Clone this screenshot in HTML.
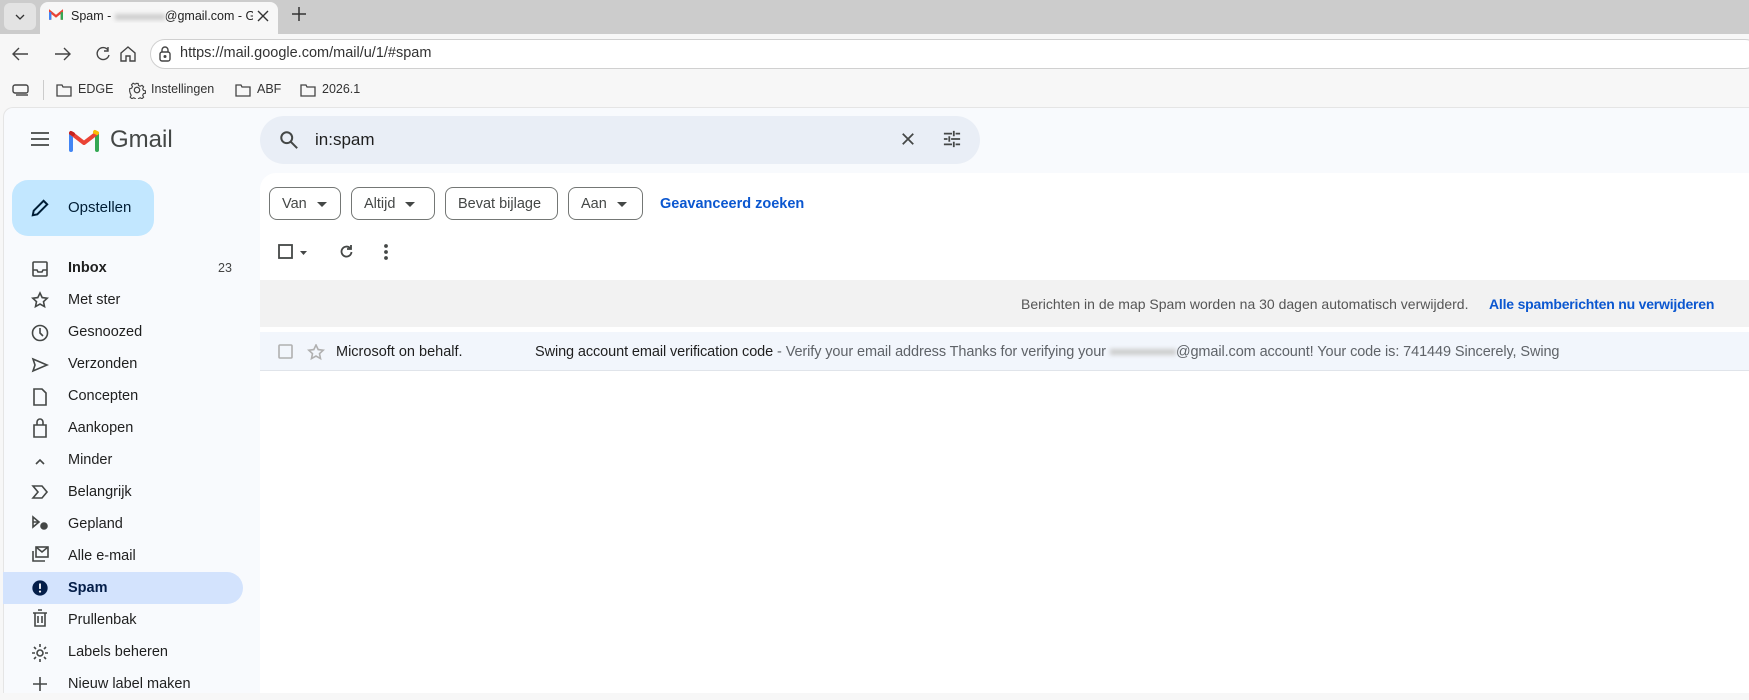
<!DOCTYPE html>
<html><head><meta charset="utf-8">
<style>
*{box-sizing:border-box;margin:0;padding:0}
body{width:1749px;height:693px;overflow:hidden;background:#f7f7f7;font-family:"Liberation Sans",Arial,sans-serif;position:relative;color:#1f1f1f}
.abs{position:absolute}
.tabbar{left:0;top:0;width:1749px;height:34px;background:#cccccc}
.tab{left:40px;top:2px;width:238px;height:32px;background:#f7f7f7;border-radius:8px 8px 0 0}
.addr{left:0;top:34px;width:1749px;height:39px;background:#f7f7f7}
.url{left:150px;top:39px;width:1610px;height:30px;background:#fff;border:1px solid #d0d0d0;border-radius:15px}
.bm{font-size:12.5px;color:#333;top:82px}
.gm{left:3px;top:107px;width:1746px;height:586px;background:#f8fafd;border-radius:10px 0 0 0;border-left:1px solid #e5e5e5;border-top:1px solid #e5e5e5}
.nav{left:68px;font-size:14.5px;color:#1f1f1f}
.main{left:260px;top:173px;width:1489px;height:520px;background:#fff;border-radius:16px 0 0 0}
.chip{top:187px;height:33px;border:1px solid #747775;border-radius:8px;font-size:14.5px;color:#444746;line-height:33px;padding-left:12px}
.tri{display:inline-block;width:0;height:0;border-left:5px solid transparent;border-right:5px solid transparent;border-top:5px solid #444746;vertical-align:middle;margin-left:10px}
</style></head><body>
<div class="abs tabbar"></div>
<div class="abs" style="left:4px;top:3px;width:32px;height:27px;background:#e3e3e3;border-radius:6px"></div>
<svg class="abs" style="left:13px;top:10px" width="14" height="14" viewBox="0 0 14 14"><path d="M3 5l4 4 4-4" fill="none" stroke="#333" stroke-width="1.3"/></svg>
<div class="abs tab"></div>
<svg class="abs" style="left:49px;top:9px" width="14" height="11" viewBox="0 0 24 18"><path d="M2 18V4l10 8 10-8v14" fill="none" stroke="#ea4335" stroke-width="4"/><path d="M2 18V5" stroke="#4285f4" stroke-width="4"/><path d="M22 18V5" stroke="#34a853" stroke-width="4"/></svg>
<div class="abs" style="left:71px;top:9px;width:182px;overflow:hidden;white-space:nowrap;font-size:12.5px;color:#222">Spam - <span style="display:inline-block;width:50px;height:6px;background:#ccc;filter:blur(2px);vertical-align:middle"></span>@gmail.com - Gm</div>
<svg class="abs" style="left:257px;top:10px" width="12" height="12" viewBox="0 0 12 12"><path d="M1 1l10 10M11 1L1 11" stroke="#333" stroke-width="1.4"/></svg>
<svg class="abs" style="left:291px;top:6px" width="16" height="16" viewBox="0 0 16 16"><path d="M8 1v14M1 8h14" stroke="#333" stroke-width="1.5"/></svg>
<div class="abs addr"></div>
<svg class="abs" style="left:10px;top:44px" width="120" height="20" viewBox="0 0 120 20" fill="none" stroke="#444" stroke-width="1.4"><path d="M18 10H3M9 4l-6 6 6 6"/><path d="M45 10h15M54 4l6 6-6 6"/><path d="M98 6a6 6 0 1 0 1 5M98 3v4h-4"/></svg>
<svg class="abs" style="left:118px;top:44px" width="20" height="20" viewBox="0 0 20 20" fill="none" stroke="#444" stroke-width="1.4"><path d="M3 9l7-6 7 6v8h-5v-5H8v5H3z"/></svg>
<div class="abs url"></div>
<svg class="abs" style="left:157px;top:45px" width="16" height="18" viewBox="0 0 16 18" fill="none" stroke="#444" stroke-width="1.4"><rect x="3" y="7" width="10" height="9" rx="2"/><path d="M5 7V5a3 3 0 0 1 6 0v2"/><circle cx="8" cy="11.5" r=".8" fill="#444"/></svg>
<div class="abs" style="left:180px;top:45px;font-size:14.5px;color:#333">https://mail.google.com/mail/u/1/#spam</div>
<svg class="abs" style="left:12px;top:83px" width="18" height="14" viewBox="0 0 18 14" fill="none" stroke="#444" stroke-width="1.4"><rect x="1" y="2" width="15" height="8" rx="2"/><path d="M4 12h12"/></svg>
<div class="abs" style="left:43px;top:80px;width:1px;height:20px;background:#ccc"></div>
<svg class="abs" style="left:56px;top:83px" width="16" height="14" viewBox="0 0 16 14" fill="none" stroke="#444" stroke-width="1.3"><path d="M1 2h5l1 2h8v9H1z"/></svg>
<div class="abs bm" style="left:78px">EDGE</div>
<svg class="abs" style="left:128px;top:81px" width="18" height="18" viewBox="0 0 20 20" fill="none" stroke="#444" stroke-width="1.4"><circle cx="10" cy="10" r="3"/><path d="M8.5 2h3l.5 2.5 2 1 2.3-1.2 2 2-1.2 2.3 1 2 2.5.5v3l-2.5.5-1 2 1.2 2.3-2 2-2.3-1.2-2 1-.5 2.5h-3l-.5-2.5-2-1-2.3 1.2-2-2 1.2-2.3-1-2L1 11.5v-3l2.5-.5 1-2L3.3 3.7l2-2 2.3 1.2 2-1z" transform="scale(.9) translate(1 1)"/></svg>
<div class="abs bm" style="left:151px">Instellingen</div>
<svg class="abs" style="left:235px;top:83px" width="16" height="14" viewBox="0 0 16 14" fill="none" stroke="#444" stroke-width="1.3"><path d="M1 2h5l1 2h8v9H1z"/></svg>
<div class="abs bm" style="left:257px">ABF</div>
<svg class="abs" style="left:300px;top:83px" width="16" height="14" viewBox="0 0 16 14" fill="none" stroke="#444" stroke-width="1.3"><path d="M1 2h5l1 2h8v9H1z"/></svg>
<div class="abs bm" style="left:322px">2026.1</div>

<div class="abs gm"></div>
<svg class="abs" style="left:31px;top:132px" width="18" height="14" viewBox="0 0 18 14"><path d="M0 1h18M0 7h18M0 13h18" stroke="#444746" stroke-width="1.8"/></svg>
<svg class="abs" style="left:69px;top:129px" width="30" height="23" viewBox="0 0 30 23"><path d="M2 21V5" stroke="#4285f4" stroke-width="4" stroke-linecap="round"/><path d="M28 21V5" stroke="#34a853" stroke-width="4" stroke-linecap="round"/><path d="M2 4l13 10L28 4" fill="none" stroke="#ea4335" stroke-width="4" stroke-linejoin="round"/><path d="M26 3l2 1" stroke="#fbbc04" stroke-width="4" stroke-linecap="round"/><path d="M2 4l2 1" stroke="#c5221f" stroke-width="4" stroke-linecap="round"/></svg>
<div class="abs" style="left:110px;top:126px;font-size:24px;color:#444746">Gmail</div>

<div class="abs" style="left:260px;top:116px;width:720px;height:48px;background:#e9eef6;border-radius:24px"></div>
<svg class="abs" style="left:279px;top:130px" width="20" height="20" viewBox="0 0 22 22" fill="none" stroke="#444746" stroke-width="2.2"><circle cx="8.5" cy="8.5" r="6"/><path d="M13 13l7 7"/></svg>
<div class="abs" style="left:315px;top:130px;font-size:17px;color:#1f1f1f">in:spam</div>
<svg class="abs" style="left:901px;top:132px" width="14" height="14" viewBox="0 0 16 16"><path d="M2 2l12 12M14 2L2 14" stroke="#444746" stroke-width="2"/></svg>
<svg class="abs" style="left:943px;top:130px" width="18" height="18" viewBox="0 0 20 18" stroke="#444746" stroke-width="2"><path d="M1 3h9M14 3h5M12 0v6M1 9h4M9 9h10M7 6v6M1 15h9M14 15h5M12 12v6"/></svg>

<div class="abs" style="left:12px;top:180px;width:142px;height:56px;background:#c2e7ff;border-radius:16px"></div>
<svg class="abs" style="left:31px;top:199px" width="18" height="18" viewBox="0 0 20 20" fill="none" stroke="#001d35" stroke-width="2.2"><path d="M2 18l1-5L14 2l4 4L7 17z"/></svg>
<div class="abs" style="left:68px;top:199px;font-size:15px;color:#001d35">Opstellen</div>

<div class="abs" style="left:3px;top:572px;width:240px;height:32px;background:#d3e3fd;border-radius:0 16px 16px 0"></div>
<div class="abs nav" style="top:260px;font-weight:bold">Inbox</div>
<div class="abs" style="left:218px;top:261px;font-size:12.5px;color:#444">23</div>
<div class="abs nav" style="top:292px">Met ster</div>
<div class="abs nav" style="top:324px">Gesnoozed</div>
<div class="abs nav" style="top:356px">Verzonden</div>
<div class="abs nav" style="top:388px">Concepten</div>
<div class="abs nav" style="top:420px">Aankopen</div>
<div class="abs nav" style="top:452px">Minder</div>
<div class="abs nav" style="top:484px">Belangrijk</div>
<div class="abs nav" style="top:516px">Gepland</div>
<div class="abs nav" style="top:548px">Alle e-mail</div>
<div class="abs nav" style="top:580px;font-weight:bold;color:#041e49">Spam</div>
<div class="abs nav" style="top:612px">Prullenbak</div>
<div class="abs nav" style="top:644px">Labels beheren</div>
<div class="abs nav" style="top:676px">Nieuw label maken</div>
<svg class="abs" style="left:31px;top:260px" width="18" height="440" viewBox="1 1 18 440" fill="none" stroke="#444746" stroke-width="1.6">
<rect x="3" y="3" width="14" height="14" rx="1"/><path d="M3 11h4l1 2h4l1-2h4"/>
<path d="M10 34l2.2 4.6 5 .6-3.7 3.4 1 5L10 45l-4.5 2.6 1-5-3.7-3.4 5-.6z"/>
<circle cx="10" cy="74" r="7.5"/><path d="M10 69v5l3 3"/>
<path d="M3 100l14 6-14 6 2-6z"/>
<path d="M4 130h8l4 4v12H4z"/>
<path d="M4 166h12v12H4zM7 166v-3a3 3 0 0 1 6 0v3"/>
<path d="M6 205l4-4 4 4"/>
<path d="M3 227h9l5 6-5 6H3l5-6z"/>
<path d="M3 258v10l6-5zM3 263h6"/><circle cx="14" cy="267" r="3" fill="#444746"/>
<path d="M3 292v10h12"/><rect x="6" y="288" width="12" height="10"/><path d="M6 288l6 5 6-5"/>
<path d="M5 354h10v13H5zM3 354h14M8 351h4M8 357v7M12 357v7"/>
<circle cx="10" cy="394" r="3"/><path d="M10 385v3M10 400v3M2 394h3M15 394h3M4 388l2 2M14 398l2 2M4 400l2-2M14 390l2-2"/>
<path d="M10 418v14M3 425h14"/>
</svg>
<svg class="abs" style="left:31px;top:579px" width="18" height="18" viewBox="0 0 20 20"><circle cx="10" cy="10" r="8.5" fill="#041e49"/><path d="M10 5v6" stroke="#fff" stroke-width="2"/><circle cx="10" cy="14" r="1.2" fill="#fff"/></svg>

<div class="abs main"></div>
<div class="abs chip" style="left:269px;width:72px">Van<span class="tri"></span></div>
<div class="abs chip" style="left:351px;width:84px">Altijd<span class="tri"></span></div>
<div class="abs chip" style="left:445px;width:113px">Bevat bijlage</div>
<div class="abs chip" style="left:568px;width:75px">Aan<span class="tri"></span></div>
<div class="abs" style="left:660px;top:196px;font-size:14.5px;color:#0b57d0;font-weight:bold">Geavanceerd zoeken</div>

<svg class="abs" style="left:278px;top:243px" width="130" height="18" viewBox="0 0 130 18" fill="none" stroke="#444746" stroke-width="1.8"><rect x="1" y="2" width="13" height="13"/><path d="M22 8h7l-3.5 4z" fill="#444746" stroke="none"/><path d="M72 5a5 5 0 1 0 1.5 4M73 2v4h-4"/><circle cx="108" cy="3" r="1" fill="#444746"/><circle cx="108" cy="9" r="1" fill="#444746"/><circle cx="108" cy="15" r="1" fill="#444746"/></svg>

<div class="abs" style="left:260px;top:280px;width:1489px;height:47px;background:#f2f2f2"></div>
<div class="abs" style="left:1021px;top:296px;font-size:14px;color:#555">Berichten in de map Spam worden na 30 dagen automatisch verwijderd.</div>
<div class="abs" style="left:1489px;top:296px;font-size:14px;color:#0b57d0;font-weight:bold;letter-spacing:-0.2px">Alle spamberichten nu verwijderen</div>

<div class="abs" style="left:260px;top:332px;width:1489px;height:39px;background:#f2f6fc;border-bottom:1px solid #e0e4ea"></div>
<svg class="abs" style="left:278px;top:344px" width="70" height="18" viewBox="0 0 70 18" fill="none" stroke="#b0b0b0" stroke-width="1.6"><rect x="1" y="1" width="13" height="13" rx="1"/><path d="M38 1l2.2 4.6 5 .6-3.7 3.4 1 5L38 12l-4.5 2.6 1-5-3.7-3.4 5-.6z"/></svg>
<div class="abs" style="left:336px;top:344px;font-size:14.5px;color:#1f1f1f">Microsoft on behalf.</div>
<div class="abs" style="left:535px;top:344px;font-size:14.5px;color:#1f1f1f;white-space:nowrap;letter-spacing:-0.1px">Swing account email verification code <span style="color:#5f6368">- Verify your email address Thanks for verifying your <span style="display:inline-block;width:66px;height:6px;background:#ccc;filter:blur(2px);vertical-align:middle"></span>@gmail.com account! Your code is: 741449 Sincerely, Swing</span></div>
</body></html>
